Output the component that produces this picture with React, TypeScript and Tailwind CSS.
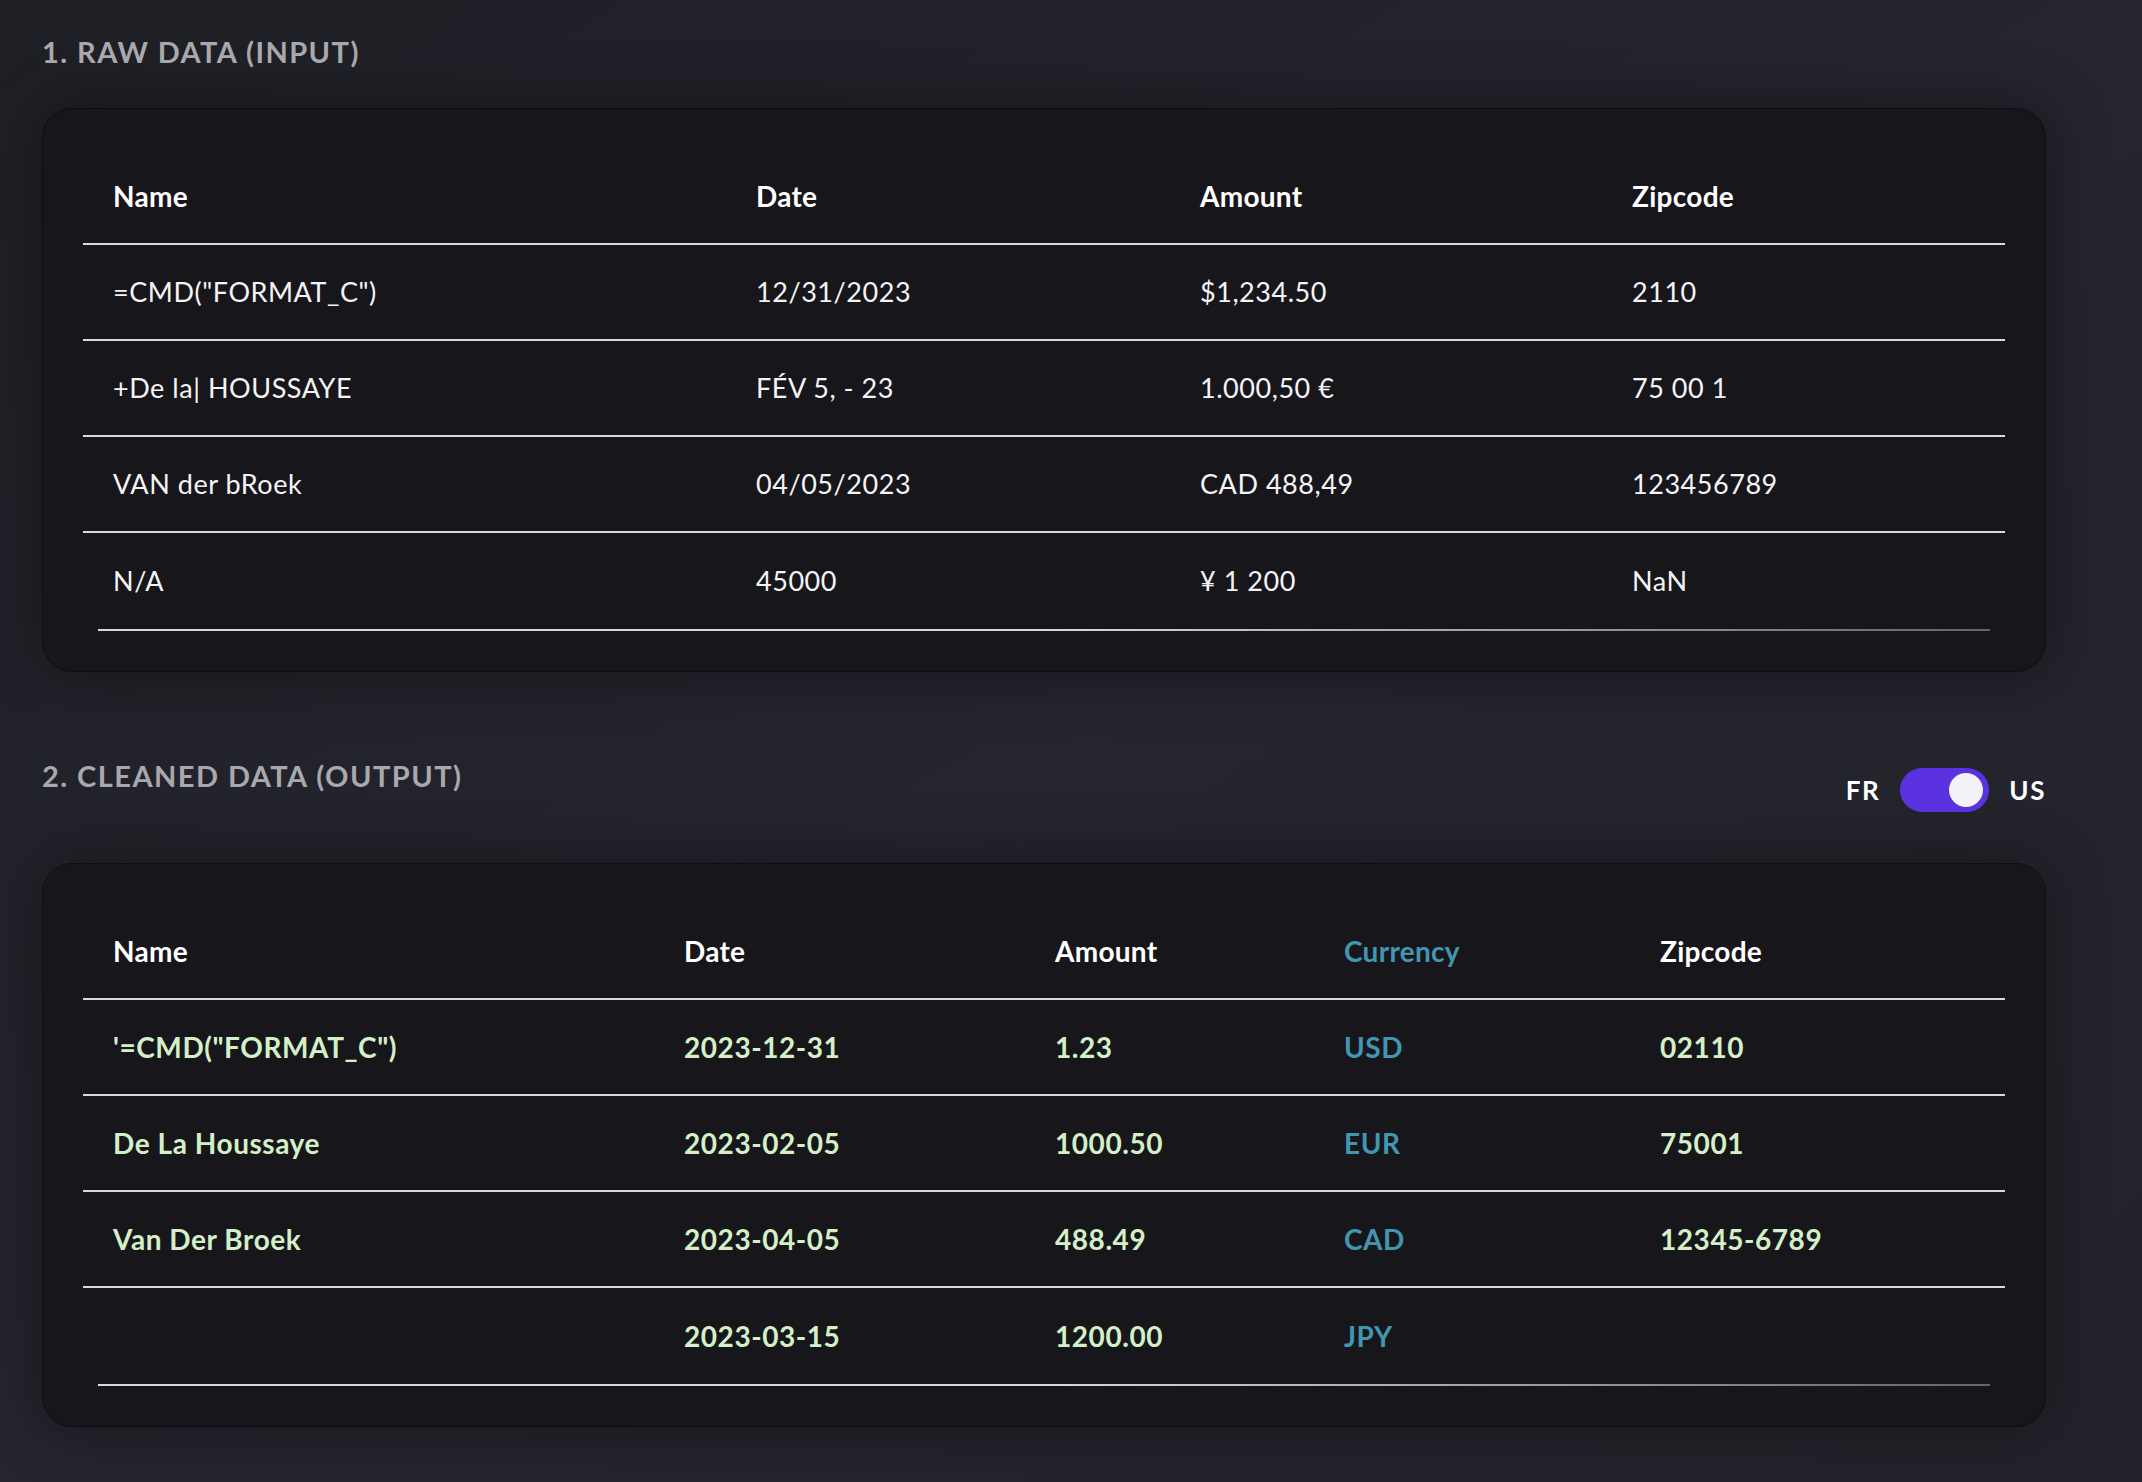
import React from "react";

const RAW_COLS = "grid-cols-[643px_444px_432px_1fr]";
const CLEAN_COLS = "grid-cols-[571px_371px_289px_316px_1fr]";

const RAW_ROWS = [
  ['=CMD("FORMAT_C")', "12/31/2023", "$1,234.50", "2110"],
  ["+De la| HOUSSAYE", "FÉV 5, - 23", "1.000,50 €", "75 00 1"],
  ["VAN der bRoek", "04/05/2023", "CAD 488,49", "123456789"],
  ["N/A", "45000", "¥ 1 200", "NaN"],
];

const CLEAN_ROWS = [
  ["'=CMD(\"FORMAT_C\")", "2023-12-31", "1.23", "USD", "02110"],
  ["De La Houssaye", "2023-02-05", "1000.50", "EUR", "75001"],
  ["Van Der Broek", "2023-04-05", "488.49", "CAD", "12345-6789"],
  ["", "2023-03-15", "1200.00", "JPY", ""],
];

const Card = ({ children }: { children: React.ReactNode }) => (
  <div className="rounded-[30px] border border-[#0e0e11] bg-[#17171b] p-10 shadow-[0_0_60px_rgba(0,0,0,0.35)]">
    {children}
  </div>
);

const BottomLine = () => (
  <div className="mx-[15px] h-[2px] bg-gradient-to-r from-[#d9d9d9] via-[#d9d9d9] to-[#d9d9d9]/40" />
);

const RawTable = () => (
  <div className="flex flex-col">
    <div className={`grid ${RAW_COLS} h-[96px] items-center border-b-2 border-[#d9d9d9] text-[28px] font-bold tracking-[0.01em] text-white`}>
      {["Name", "Date", "Amount", "Zipcode"].map((h) => (
        <div key={h} className="pl-[30px]">
          {h}
        </div>
      ))}
    </div>
    {RAW_ROWS.map((row, i) => (
      <div
        key={i}
        className={`grid ${RAW_COLS} h-[96px] items-center text-[27px] tracking-[0.02em] text-[#f4f4f6] ${
          i < RAW_ROWS.length - 1 ? "border-b-2 border-[#d9d9d9]" : ""
        }`}
      >
        {row.map((c, j) => (
          <div key={j} className="pl-[30px] whitespace-pre">
            {c}
          </div>
        ))}
      </div>
    ))}
    <BottomLine />
  </div>
);

const CleanTable = () => (
  <div className="flex flex-col">
    <div className={`grid ${CLEAN_COLS} h-[96px] items-center border-b-2 border-[#d9d9d9] text-[28px] font-bold tracking-[0.01em] text-white`}>
      {["Name", "Date", "Amount", "Currency", "Zipcode"].map((h) => (
        <div key={h} className={`pl-[30px] ${h === "Currency" ? "text-[#4295b3]" : ""}`}>
          {h}
        </div>
      ))}
    </div>
    {CLEAN_ROWS.map((row, i) => (
      <div
        key={i}
        className={`grid ${CLEAN_COLS} h-[96px] items-center text-[28px] font-bold tracking-[0.02em] text-[#d4f0c8] ${
          i < CLEAN_ROWS.length - 1 ? "border-b-2 border-[#d9d9d9]" : ""
        }`}
      >
        {row.map((c, j) => (
          <div key={j} className={`pl-[30px] ${j === 3 ? "text-[#4295b3]" : ""}`}>
            {c}
          </div>
        ))}
      </div>
    ))}
    <BottomLine />
  </div>
);

const Toggle = () => (
  <div className="mt-[10px] flex items-center gap-[20px] text-[26px] font-bold tracking-[0.06em] text-white">
    <span>FR</span>
    <div className="flex h-[44px] w-[89px] items-center justify-end rounded-full bg-[#5b32e0] px-[6px]">
      <div className="h-[34px] w-[34px] rounded-full bg-[#f2f2f7]" />
    </div>
    <span>US</span>
  </div>
);

export default function App() {
  return (
    <div
      className="min-h-screen bg-gradient-to-br from-[#1f2026] via-[#24252d] to-[#22232a] pl-[42px] pr-[96px] pt-[34px] pb-[57px]"
      style={{ fontFamily: "Lato, 'Noto Sans', sans-serif" }}
    >
      <h2 className="text-[29px] font-bold leading-[36px] tracking-[0.05em] text-[#a8a8ad]">
        1. RAW DATA (INPUT)
      </h2>
      <div className="mt-[38px]">
        <Card>
          <RawTable />
        </Card>
      </div>

      <div className="mt-[86px] flex items-start justify-between">
        <h2 className="text-[29px] font-bold leading-[36px] tracking-[0.05em] text-[#a8a8ad]">
          2. CLEANED DATA (OUTPUT)
        </h2>
        <Toggle />
      </div>
      <div className="mt-[51px]">
        <Card>
          <CleanTable />
        </Card>
      </div>
    </div>
  );
}
